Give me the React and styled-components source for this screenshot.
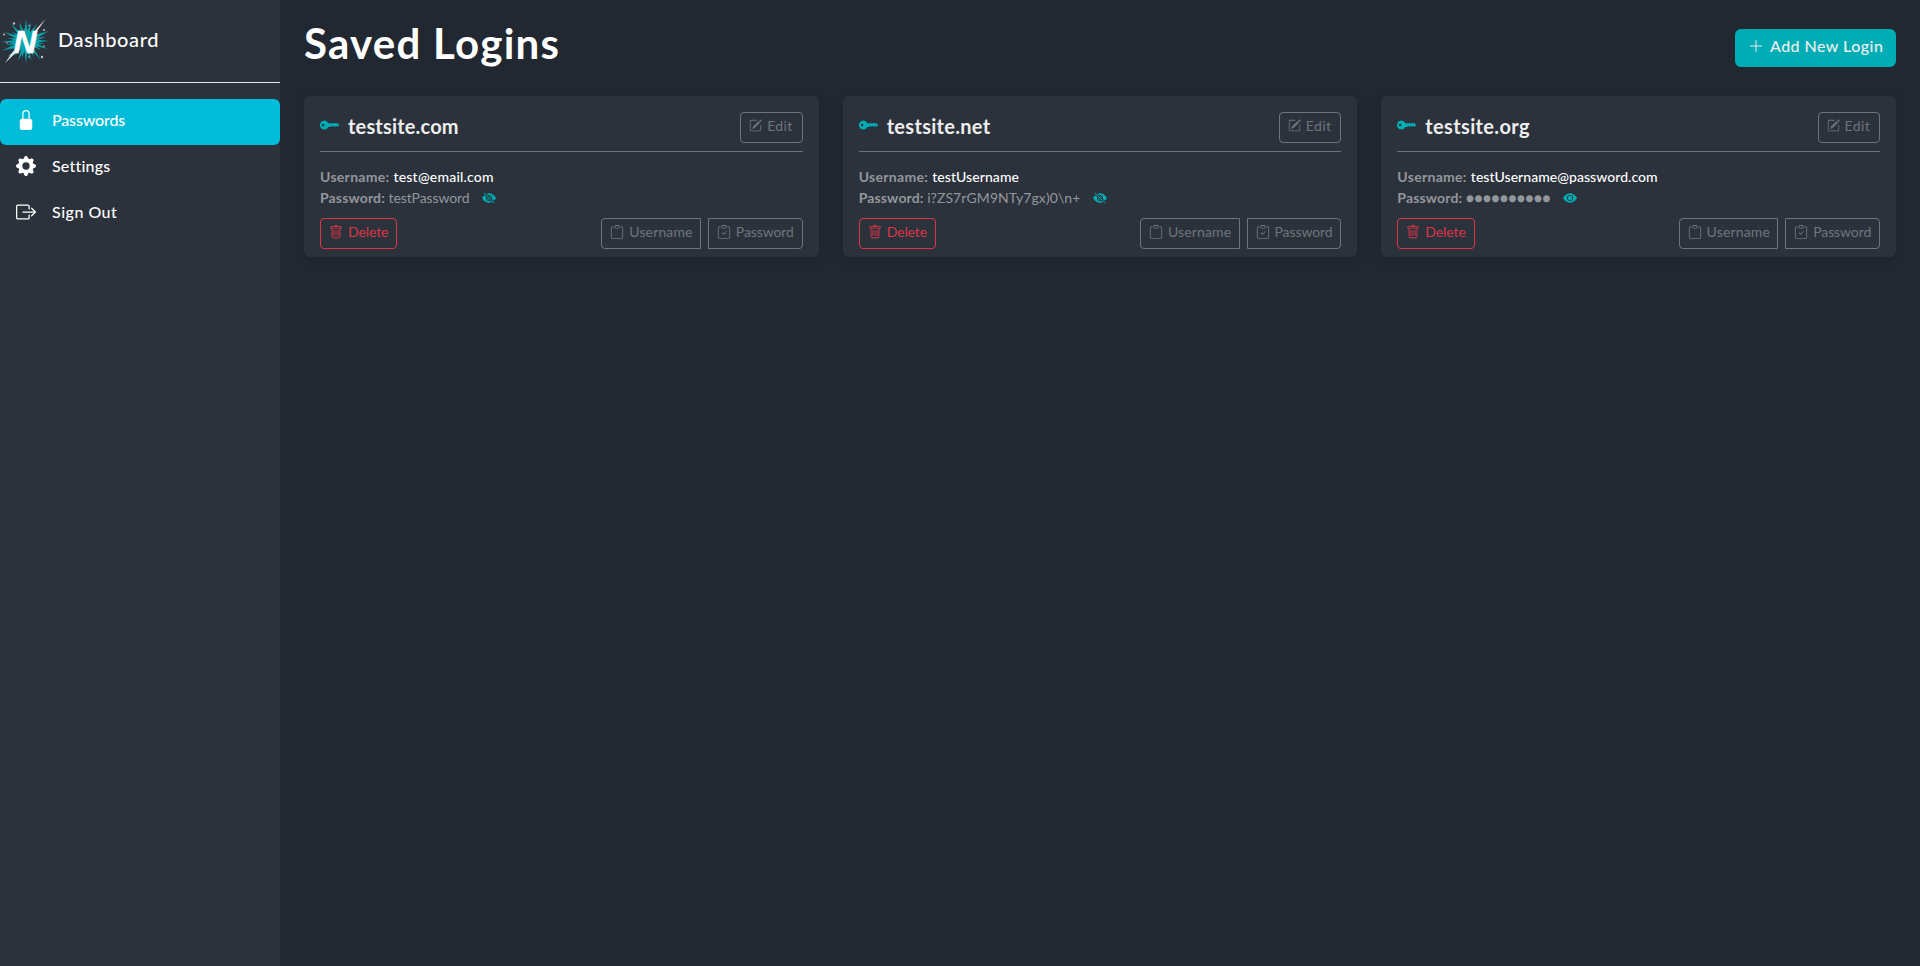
import React from "react";
import styled, { createGlobalStyle } from "styled-components";
import {
  BsKeyFill,
  BsLockFill,
  BsGearFill,
  BsBoxArrowRight,
  BsTrash,
  BsPencilSquare,
  BsClipboard,
  BsClipboardCheck,
  BsPlusLg,
  BsEyeFill,
  BsEyeSlashFill,
} from "react-icons/bs";

const color = {
  page: "#222831",
  panel: "#2c323b",
  accent: "#00adb5",
  active: "#00bcd8",
  text: "#eeeeee",
  muted: "#93969b",
  outline: "#6c757d",
  danger: "#dc3545",
};

const GlobalStyle = createGlobalStyle`
  * { box-sizing: border-box; }
  body {
    margin: 0;
    background: ${color.page};
    color: ${color.text};
    font-family: Lato, "Liberation Sans", sans-serif;
  }
  svg { display: block; flex: none; }
`;

const Layout = styled.div`
  display: flex;
  height: 100vh;
  overflow: hidden;
`;

const Sidebar = styled.aside`
  width: 280px;
  flex: none;
  background: ${color.panel};
`;

const Brand = styled.div`
  display: flex;
  align-items: center;
  height: 83px;
  border-bottom: 1px solid #e6e7e8;
  gap: 7px;
`;

const BrandName = styled.span`
  font-size: 20px;
  line-height: 24px;
  font-weight: 500;
  letter-spacing: 0.6px;
  padding-bottom: 4px;
  color: #fff;
`;

const Nav = styled.nav`
  display: flex;
  flex-direction: column;
  padding-top: 16px;
`;

const NavItem = styled.a`
  display: flex;
  align-items: center;
  gap: 16px;
  height: 46px;
  padding: 0 16px 4px;
  border-radius: 6px;
  color: #fff;
  background: ${(p) => (p.$active ? color.active : "transparent")};
  font-size: 16px;
  line-height: 24px;
  font-weight: 500;
  letter-spacing: ${(p) => p.$track}px;
`;

const Main = styled.main`
  flex: 1;
  padding: 18px 24px 0;
`;

const Header = styled.header`
  display: flex;
  justify-content: space-between;
  align-items: flex-start;
  height: 78px;
`;

const Title = styled.h1`
  margin: 1px 0 0;
  font-size: 42px;
  line-height: 48px;
  font-weight: 700;
  letter-spacing: 1.25px;
  color: #fff;
`;

const AddButton = styled.button`
  display: flex;
  gap: 6px;
  width: 161px;
  height: 38px;
  margin-top: 11px;
  padding: 5px 0 0 13px;
  border: 0;
  border-radius: 6px;
  background: ${color.accent};
  color: ${color.text};
  font: 500 16px/24px Lato, sans-serif;
  letter-spacing: 0.45px;
  white-space: nowrap;
  svg { margin-top: 4px; }
`;

const Cards = styled.section`
  display: grid;
  grid-template-columns: repeat(3, 1fr);
  gap: 24px;
`;

const Card = styled.article`
  padding: 16px 16px 8px;
  border-radius: 6px;
  background: ${color.panel};
  box-shadow: 0 2px 10px rgba(0, 0, 0, 0.12);
`;

const CardHeader = styled.div`
  display: flex;
  justify-content: space-between;
  padding-bottom: 8px;
  border-bottom: 1px solid ${color.outline};
`;

const Site = styled.div`
  display: flex;
  gap: 8px;
  height: 24px;
  margin-top: 2px;
  font-size: 20px;
  line-height: 24px;
  font-weight: 700;
  letter-spacing: ${(p) => p.$track}px;
  svg { margin-top: 1px; color: ${color.accent}; }
`;

const Details = styled.dl`
  margin: 14px 0 10px;
`;

const Field = styled.div`
  display: flex;
  height: 21px;
  font-size: 14px;
  line-height: 21px;
  color: ${color.muted};
  svg { margin: 4px 0 0 12.5px; color: ${color.accent}; }
`;

const Label = styled.dt`
  width: ${(p) => p.$width}px;
  font-weight: 700;
  letter-spacing: ${(p) => p.$track}px;
`;

const Value = styled.dd`
  margin: 0;
  font-weight: ${(p) => (p.$bright ? 500 : 400)};
  color: ${(p) => (p.$bright ? "#fff" : "inherit")};
  letter-spacing: ${(p) => p.$track}px;
`;

const Actions = styled.div`
  display: flex;
  justify-content: space-between;
`;

const Group = styled.div`
  display: flex;
  gap: 7px;
`;

const OutlineButton = styled.button`
  display: flex;
  gap: 5px;
  width: ${(p) => p.$width}px;
  height: 31px;
  padding: 3px 0 0 8px;
  border: 1px solid ${(p) => p.$color || color.outline};
  border-radius: ${(p) => p.$radius || "4px"};
  background: transparent;
  color: ${(p) => p.$color || color.outline};
  font: 400 14px/19px Lato, sans-serif;
  letter-spacing: ${(p) => p.$track}px;
  white-space: nowrap;
  svg { margin-top: 3px; }
`;

const rays = [
  [26, 19], [31, 22], [37, 24], [39, 29], [44, 32], [49, 31], [46, 37], [49, 41],
  [44, 44], [48, 49], [41, 50], [41, 60], [34, 57], [31, 61], [26, 63], [22, 58],
  [18, 61], [14, 56], [8, 57], [9, 50], [2, 51], [6, 45], [1, 42], [8, 38],
  [4, 32], [12, 32], [11, 24], [18, 29], [19, 22], [24, 28],
];

const stars = [
  [14, 23.5, 1.2], [29, 25.5, 0.8], [44, 30, 1], [4, 34.5, 1], [7, 43, 0.7],
  [44, 46, 0.8], [29, 57, 0.8], [42, 57, 1.2], [10, 55, 0.7],
];

function Logo() {
  const cx = 26;
  const cy = 41;
  return (
    <svg width="51" height="82" viewBox="0 0 51 82">
      {rays.map(([x, y]) => {
        const d = Math.hypot(x - cx, y - cy);
        const nx = (-(y - cy) / d) * 2.6;
        const ny = ((x - cx) / d) * 2.6;
        return (
          <polygon
            key={`${x}-${y}`}
            fill="#08a5ae"
            points={`${x},${y} ${cx + nx},${cy + ny} ${cx - nx},${cy - ny}`}
          />
        );
      })}
      <circle cx={cx} cy={cy} r="10" fill="#08a5ae" />
      <polygon fill="#e9ebed" points="45.5,19 36.5,32 35,30.5" />
      <polygon fill="#e9ebed" points="5,63 13.5,51 15.5,53" />
      {stars.map(([x, y, r]) => (
        <circle key={`${x}-${y}`} cx={x} cy={y} r={r} fill="#b9bfc5" />
      ))}
      <text
        x="13.5"
        y="52.5"
        fontFamily="Liberation Sans"
        fontSize="32"
        fontWeight="700"
        fontStyle="italic"
        fill="#fff"
        stroke="#fff"
        strokeWidth="0.6"
      >
        N
      </text>
    </svg>
  );
}

const logins = [
  { site: "testsite.com", siteTrack: 0.18, user: "test@email.com", userTrack: 0.2, pass: "testPassword", passTrack: -0.1, shown: true },
  { site: "testsite.net", siteTrack: 0.3, user: "testUsername", userTrack: 0.08, pass: "i?ZS7rGM9NTy7gx)0\\n+", passTrack: 0.08, shown: true },
  { site: "testsite.org", siteTrack: 0.35, user: "testUsername@password.com", userTrack: 0.04, pass: "●●●●●●●●●●", passTrack: 0.08, shown: false },
];

function LoginCard({ login }) {
  return (
    <Card>
      <CardHeader>
        <Site $track={login.siteTrack}>
          <BsKeyFill size={20} />
          {login.site}
        </Site>
        <OutlineButton $width={62.5} $track={0.4}>
          <BsPencilSquare size={13} />
          Edit
        </OutlineButton>
      </CardHeader>
      <Details>
        <Field>
          <Label $width={73.5} $track={0.3}>Username:</Label>
          <Value $bright $track={login.userTrack}>{login.user}</Value>
        </Field>
        <Field>
          <Label $width={68.5} $track={0.15}>Password:</Label>
          <Value $track={login.passTrack}>{login.pass}</Value>
          {login.shown ? <BsEyeSlashFill size={14} /> : <BsEyeFill size={14} />}
        </Field>
      </Details>
      <Actions>
        <OutlineButton $width={77.3} $track={-0.1} $color={color.danger}>
          <BsTrash size={14} />
          Delete
        </OutlineButton>
        <Group>
          <OutlineButton $width={99.6} $track={0.15} $radius="4px 0 0 4px">
            <BsClipboard size={14} />
            Username
          </OutlineButton>
          <OutlineButton $width={94.8} $track={-0.1} $radius="0 4px 4px 0">
            <BsClipboardCheck size={14} />
            Password
          </OutlineButton>
        </Group>
      </Actions>
    </Card>
  );
}

export default function App() {
  return (
    <>
      <GlobalStyle />
      <Layout>
        <Sidebar>
          <Brand>
            <Logo />
            <BrandName>Dashboard</BrandName>
          </Brand>
          <Nav>
            <NavItem $active $track={-0.15}>
              <BsLockFill size={20} />
              Passwords
            </NavItem>
            <NavItem $track={0.2}>
              <BsGearFill size={20} />
              Settings
            </NavItem>
            <NavItem $track={0.5}>
              <BsBoxArrowRight size={20} />
              Sign Out
            </NavItem>
          </Nav>
        </Sidebar>
        <Main>
          <Header>
            <Title>Saved Logins</Title>
            <AddButton>
              <BsPlusLg size={16} />
              Add New Login
            </AddButton>
          </Header>
          <Cards>
            {logins.map((login) => (
              <LoginCard key={login.site} login={login} />
            ))}
          </Cards>
        </Main>
      </Layout>
    </>
  );
}
